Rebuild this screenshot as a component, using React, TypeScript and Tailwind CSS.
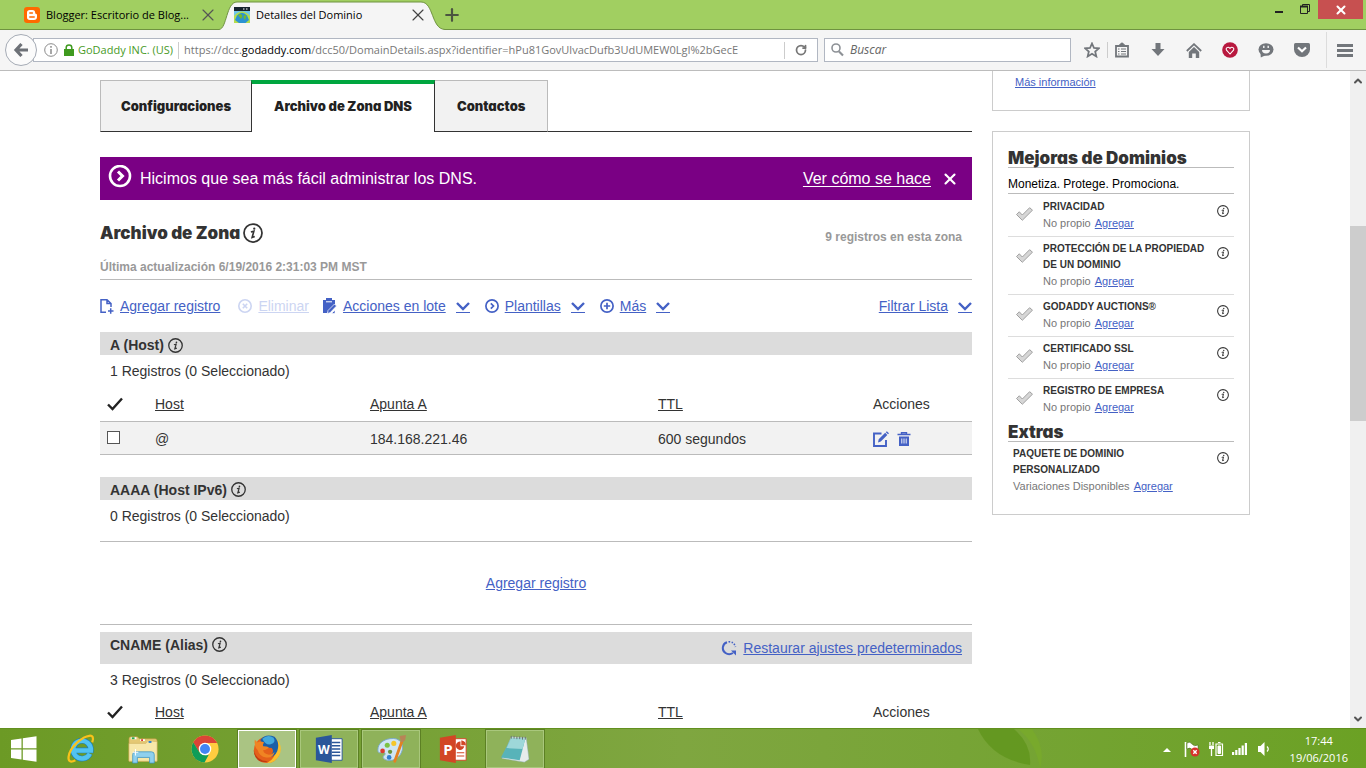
import React from 'react';
import { ChevronDown, ChevronUp, RotateCw, Plus, X } from 'lucide-react';

const linkClass = 'text-[#4461c5] underline';
const heavyFont = "font-[Inter] font-black [font-feature-settings:'cv11']";

const records = [{ host: '@', target: '184.168.221.46', ttl: '600 segundos' }];

const upgrades = [
    'PRIVACIDAD',
    'PROTECCIÓN DE LA PROPIEDAD DE UN DOMINIO',
    'GODADDY AUCTIONS®',
    'CERTIFICADO SSL',
    'REGISTRO DE EMPRESA',
];

const InfoIcon = ({ className = '' }: { className?: string }) => (
    <svg viewBox="0 0 16 16" className={className} fill="none" stroke="#333">
        <circle cx="8" cy="8" r="7.2" strokeWidth="1.4" />
        <path d="M6.3 7.2 8.7 6.6 7.3 11.6 9.4 10.8" strokeWidth="1.3" />
        <circle cx="9" cy="4.5" r=".9" fill="#333" stroke="none" />
    </svg>
);

const HeavyCheck = () => (
    <svg viewBox="0 0 16 14" className="h-[14px] w-4" fill="none" stroke="#222" strokeWidth="2.4">
        <path d="M1 7.5 5.5 12 15 1.5" />
    </svg>
);

const GreyCheck = () => (
    <svg viewBox="0 0 17 14" className="h-[14px] w-[17px]">
        <path d="M.5 7.5 3.3 4.8 6.3 8 13.6.7 16.5 3.2 6.3 13.3Z" fill="#d6d6d6" stroke="#999" strokeWidth=".9" />
    </svg>
);

const Caret = () => (
    <svg viewBox="0 0 14 13" className="h-[13px] w-[14px]" fill="none" stroke="#4461c5">
        <path d="M1 3 7 9 13 3" strokeWidth="2.4" />
        <path d="M0 12.5H14" />
    </svg>
);

const BrowserTabs = () => (
    <div className="flex h-[30px] shrink-0 bg-[#a1cf61] text-[11px] text-black shadow-[inset_0_-1px_0_#6f9340]">
        <div className="flex w-[222px] items-center pl-6">
            <svg viewBox="0 0 16 16" className="mr-[6px] h-4 w-4 shrink-0">
                <rect width="16" height="16" rx="3" fill="#ff6a00" />
                <path d="M5.8 3h2.7C10.3 3 11.2 4.2 11.2 5.7c0 1 .4 1 1.2 1.2.5.2.6.5.6 1v2.2C13 12 11.8 13 10 13H5.8C4 13 3 12 3 10.2V5.8C3 4 4 3 5.8 3Z" fill="#fff" />
                <path d="M5.8 6.1h2.6M5.8 9.9h4.4" stroke="#ff6a00" strokeWidth="1.5" strokeLinecap="round" />
            </svg>
            <span className="w-[152px] whitespace-nowrap">Blogger: Escritorio de Blog...</span>
            <button aria-label="Cerrar pestaña"><X size={20} strokeWidth={1.4} className="text-[#555]" /></button>
        </div>
        <div className="relative flex w-[220px] items-center pl-3">
            <svg viewBox="0 0 226 30" preserveAspectRatio="none" className="absolute -left-[3px] top-0 h-[30px] w-[226px]">
                <path d="M0 29.5C8 29 7 2 18 2H202C215 2 212 29 226 29.5V30H0Z" fill="#f5f5f5" />
                <path d="M0 29.5C8 29 7 2 18 2H202C215 2 212 29 226 29.5" fill="none" stroke="#6f9340" />
            </svg>
            <svg viewBox="0 0 16 16" className="relative mr-[6px] h-4 w-4 shrink-0">
                <rect width="16" height="16" rx="1.5" fill="#6fc5ea" />
                <path d="M0 0H16V4H0Z" fill="#16242e" />
                <path d="M9 2H10.5M12 2H13.5" stroke="#fff" />
                <path d="M0 9Q8 0 16 9V16H0Z" fill="#b5dd4b" />
                <path d="M3 8.5Q8 3 13 8.5L15 13 11.5 16H5L1 13Z" fill="#2b93d1" />
                <path d="M4 8 7 7 8.5 9 7 12ZM10 8 12.5 9 11 13 9.5 11Z" fill="#76b82a" />
            </svg>
            <span className="relative w-[152px] whitespace-nowrap">Detalles del Dominio</span>
            <button aria-label="Cerrar pestaña" className="relative"><X size={20} strokeWidth={1.4} className="text-[#444]" /></button>
        </div>
        <button aria-label="Nueva pestaña"><Plus size={20} strokeWidth={2.6} className="text-[#4b5540]" /></button>
        <div className="ml-auto flex items-start pr-[3px]">
            <button aria-label="Minimizar" className="h-[19px] w-[26px]">
                <svg viewBox="0 0 26 19" className="h-[19px] w-[26px]"><path d="M9 11H17V13H9Z" fill="#222" /></svg>
            </button>
            <button aria-label="Restaurar" className="h-[19px] w-[26px]">
                <svg viewBox="0 0 26 19" className="h-[19px] w-[26px]" fill="none" stroke="#222">
                    <path d="M8.5 6.5H15.5V13.5H8.5ZM10.5 6V4.5H17.5V11.5H16" />
                    <path d="M8 6.5H16" strokeWidth="2" />
                </svg>
            </button>
            <button aria-label="Cerrar" className="flex h-[19px] w-[45px] items-center justify-center bg-[#c75050]">
                <X size={14} strokeWidth={3.5} className="text-white" />
            </button>
        </div>
    </div>
);

const AddressBar = () => (
    <div className="flex h-[41px] shrink-0 items-center border-b border-[#bcbcbc] bg-[#f5f5f5] pl-[5px]">
        <button aria-label="Atrás" className="z-10 flex h-8 w-8 shrink-0 items-center justify-center rounded-full border border-[#a5abb5] bg-[#fbfbfb]">
            <svg viewBox="0 0 16 16" className="h-4 w-4" fill="none" stroke="#6d7177" strokeWidth="3.2">
                <path d="M8.5 2 3 8 8.5 14M3 8H15" />
            </svg>
        </button>
        <div className="-ml-1 flex h-6 min-w-0 flex-1 items-center border border-[#b1b7c2] bg-white pl-[10px] text-[11px]">
            <svg viewBox="0 0 14 14" className="h-[14px] w-[14px] shrink-0" fill="none" stroke="#8a8a8a">
                <circle cx="7" cy="7" r="6.3" />
                <path d="M7 6V11M7 3V4.8" strokeWidth="1.5" />
            </svg>
            <svg viewBox="0 0 10 12" className="ml-[6px] mr-1 h-3 w-[10px] shrink-0">
                <path d="M0 5H10V12H0Z" fill="#3f9a1f" />
                <path d="M2.2 6V3.5a2.8 2.6 0 0 1 5.6 0V6" fill="none" stroke="#3f9a1f" strokeWidth="1.5" />
            </svg>
            <span className="whitespace-nowrap text-[#489a1f]">GoDaddy INC. (US)</span>
            <span className="mx-[5px] h-[17px] w-px shrink-0 bg-[#ccc]" />
            <span className="whitespace-nowrap text-[#777]">
                https://dcc.<span className="text-black">godaddy.com</span>/dcc50/DomainDetails.aspx?identifier=hPu81GovUlvacDufb3UdUMEW0LgI%2bGecE
            </span>
            <span className="ml-auto h-[17px] w-px shrink-0 bg-[#ccc]" />
            <button aria-label="Recargar" className="flex w-[32px] shrink-0 justify-center">
                <RotateCw size={12} strokeWidth={3.5} className="text-[#777]" />
            </button>
        </div>
        <label className="ml-[6px] flex h-6 w-[247px] shrink-0 items-center gap-[6px] border border-[#b1b7c2] bg-white pl-[6px]">
            <svg viewBox="0 0 13 14" className="h-[14px] w-[13px]" fill="none" stroke="#8d9196">
                <circle cx="5" cy="5" r="4" strokeWidth="1.6" />
                <path d="M8 8.5 12 12.5" strokeWidth="2.2" />
            </svg>
            <input aria-label="Buscar" placeholder="Buscar" className="w-40 bg-transparent text-[12px] italic outline-none placeholder:text-[#666]" />
        </label>
        <div className="ml-[13px] flex shrink-0 items-center text-[#72767b]">
            <button aria-label="Marcador">
                <svg viewBox="0 0 16 16" className="h-4 w-4" fill="none" stroke="currentColor" strokeWidth="1.8">
                    <path d="M8 1.5 10 6 14.8 6.4 11.2 9.6 12.3 14.4 8 11.8 3.7 14.4 4.8 9.6 1.2 6.4 6 6Z" />
                </svg>
            </button>
            <span className="mx-[7px] h-4 w-px bg-[#ccc]" />
            <button aria-label="Lista">
                <svg viewBox="0 0 14 16" className="h-4 w-[14px]" fill="none" stroke="currentColor">
                    <path d="M1 4H13V14.5H1Z" strokeWidth="1.8" />
                    <path d="M4 3.5C5 3 5.5 1 7 1S9 3 10 3.5Z" fill="currentColor" />
                    <path d="M3 7H4.5M6 7H11M3 9.5H4.5M6 9.5H11M3 12H4.5M6 12H11" strokeWidth="1.2" />
                </svg>
            </button>
            <button aria-label="Descargas" className="ml-[22px]">
                <svg viewBox="0 0 14 14" className="h-[14px] w-[14px]"><path d="M4.5 0H9.5V6H13.5L7 13 .5 6H4.5Z" fill="currentColor" /></svg>
            </button>
            <button aria-label="Inicio" className="ml-[21px]">
                <svg viewBox="0 0 16 15" className="h-[15px] w-4">
                    <path d="M2.8 9 8 4 13.2 9V15H9.8V10.5H6.2V15H2.8Z" fill="currentColor" />
                    <path d="M.8 8 8 1.2 15.2 8" fill="none" stroke="currentColor" strokeWidth="1.8" />
                </svg>
            </button>
            <button aria-label="Favoritos" className="ml-5">
                <svg viewBox="0 0 16 16" className="h-4 w-4">
                    <circle cx="8" cy="8" r="7.8" fill="#b8193f" />
                    <path d="M8 12 4.5 8.2C3.3 6.3 5.7 4 8 6.3 10.3 4 12.7 6.3 11.5 8.2Z" fill="none" stroke="#fff" strokeWidth="1.1" />
                </svg>
            </button>
            <button aria-label="Hello" className="ml-5">
                <svg viewBox="0 0 16 16" className="h-4 w-4">
                    <ellipse cx="8" cy="7.5" rx="7.5" ry="6.3" fill="currentColor" />
                    <path d="M2.5 11 2.8 15.5 8 13Z" fill="currentColor" />
                    <path d="M5.8 3.8V6M10.2 3.8V6" stroke="#f5f5f5" strokeWidth="1.4" />
                    <path d="M4 8H12A4 3.4 0 0 1 4 8Z" fill="#f5f5f5" />
                </svg>
            </button>
            <button aria-label="Pocket" className="ml-5">
                <svg viewBox="0 0 16 14" className="h-[14px] w-4">
                    <path d="M1.5 0H14.5Q16 0 16 1.5V6.5A8 7.5 0 0 1 0 6.5V1.5Q0 0 1.5 0Z" fill="currentColor" />
                    <path d="M4 4.5 8 8.3 12 4.5" fill="none" stroke="#fff" strokeWidth="2.2" />
                </svg>
            </button>
            <span className="ml-4 h-9 w-px bg-[#dcdcdc]" />
            <button aria-label="Menú" className="ml-[10px] mr-[13px]">
                <svg viewBox="0 0 16 13" className="h-[13px] w-4"><path d="M0 1.5H16M0 6.5H16M0 11.5H16" stroke="currentColor" strokeWidth="2.8" /></svg>
            </button>
        </div>
    </div>
);

const Tabs = () => (
    <nav className={`flex h-[52px] text-[13px] text-[#222] ${heavyFont}`}>
        <a href="#config" className="flex items-center border border-r-0 border-[#bbb] border-b-[#333] bg-[#f2f2f2] px-5">Configuraciones</a>
        <a href="#dns" className="flex items-center border-x border-t-4 border-x-[#333] border-t-[#00a63f] px-[22px] pb-1">Archivo de Zona DNS</a>
        <a href="#contactos" className="flex items-center border border-l-0 border-[#bbb] border-b-[#333] bg-[#f2f2f2] px-[22px]">Contactos</a>
        <span className="flex-1 border-b border-[#333]" />
    </nav>
);

const Banner = () => (
    <div className="mt-[25px] flex h-[43px] items-center bg-[#7a0084] px-2 text-[16px] text-white">
        <svg viewBox="0 0 24 24" className="mb-1 mr-2 h-6 w-6" fill="none" stroke="#fff">
            <circle cx="12" cy="11" r="10" strokeWidth="2.6" />
            <path d="M10 6.5 14.5 11 10 15.5" strokeWidth="3" />
        </svg>
        <span>Hicimos que sea más fácil administrar los DNS.</span>
        <a href="#ver" className="ml-auto underline underline-offset-2">Ver cómo se hace</a>
        <button aria-label="Cerrar aviso" className="ml-[10px] mr-[5px]"><X size={18} strokeWidth={2.8} /></button>
    </div>
);

const ZoneHeader = () => (
    <div className="flex h-20 items-start justify-between border-b border-[#bbb] pt-[21px] text-[12px] font-bold text-[#999]">
        <div>
            <h2 className={`flex h-6 items-center gap-[3px] text-[17px] text-[#333] ${heavyFont}`}>
                Archivo de Zona
                <InfoIcon className="h-5 w-5" />
            </h2>
            <p className="mt-[14px] leading-4">Última actualización 6/19/2016 2:31:03 PM MST</p>
        </div>
        <p className="mr-[10px] mt-2 leading-4">9 registros en esta zona</p>
    </div>
);

const ZoneActions = () => (
    <div className="flex h-[52px] items-center text-[14px] text-[#4461c5]">
        <svg viewBox="0 0 14 16" className="mr-[6px] h-4 w-[14px]" fill="none" stroke="currentColor" strokeWidth="1.5">
            <path d="M6 14.2H1V1.7H7L11 5.5V9M7 1.7V5.5H11M8 13H13.5M10.7 10.2V15.8" />
        </svg>
        <a href="#agregar" className={linkClass}>Agregar registro</a>
        <button disabled className="ml-[18px] flex items-center gap-[6px] text-[#ccd5f2]">
            <svg viewBox="0 0 14 14" className="h-[14px] w-[14px]" fill="none" stroke="currentColor" strokeWidth="1.6">
                <circle cx="7" cy="7" r="6.2" />
                <path d="M4.8 4.8 9.2 9.2M9.2 4.8 4.8 9.2" />
            </svg>
            <span className="underline">Eliminar</span>
        </button>
        <svg viewBox="0 0 14 16" className="ml-[14px] mr-[6px] h-4 w-[14px]">
            <path d="M0 2H3V0H9V2H12V6L4 15H0Z" fill="currentColor" />
            <path d="M3 3.8H9" stroke="#fff" />
            <path d="M4.5 15.5 5 12.5 11.5 6 13.5 8 7 14.8ZM8.5 15.5H12V12Z" fill="currentColor" stroke="#fff" strokeWidth=".7" />
        </svg>
        <a href="#lote" className={linkClass}>Acciones en lote</a>
        <button aria-label="Abrir acciones" className="ml-[10px]"><Caret /></button>
        <svg viewBox="0 0 14 14" className="ml-[15px] mr-[6px] h-[14px] w-[14px]" fill="none" stroke="currentColor" strokeWidth="1.7">
            <circle cx="7" cy="7" r="6.1" />
            <path d="M5.8 4.3 8.5 7 5.8 9.7" />
        </svg>
        <a href="#plantillas" className={linkClass}>Plantillas</a>
        <button aria-label="Abrir plantillas" className="ml-[10px]"><Caret /></button>
        <svg viewBox="0 0 14 14" className="ml-[15px] mr-[6px] h-[14px] w-[14px]" fill="none" stroke="currentColor" strokeWidth="1.7">
            <circle cx="7" cy="7" r="6.1" />
            <path d="M3.8 7H10.2M7 3.8V10.2" />
        </svg>
        <a href="#mas" className={linkClass}>Más</a>
        <button aria-label="Abrir más" className="ml-[10px]"><Caret /></button>
        <a href="#filtrar" className={`ml-auto ${linkClass}`}>Filtrar Lista</a>
        <button aria-label="Abrir filtro" className="ml-[10px]"><Caret /></button>
    </div>
);

const SectionTitle = ({ children }: { children: React.ReactNode }) => (
    <h3 className="flex h-[23px] items-center gap-1 pt-[3px] font-bold">
        {children}
        <InfoIcon className="h-[15px] w-[15px]" />
    </h3>
);

const RecordTable = ({ rows }: { rows: typeof records }) => (
    <table className="w-full table-fixed text-left">
        <thead>
            <tr className="h-[34px] border-b border-[#bbb]">
                <th className="w-[55px] pl-[7px]"><HeavyCheck /></th>
                <th className="w-[215px] font-normal"><a href="#host" className="underline">Host</a></th>
                <th className="w-[288px] font-normal"><a href="#apunta" className="underline">Apunta A</a></th>
                <th className="w-[215px] font-normal"><a href="#ttl" className="underline">TTL</a></th>
                <th className="font-normal">Acciones</th>
            </tr>
        </thead>
        <tbody>
            {rows.map((row) => (
                <tr key={row.target} className="h-[33px] border-b border-[#bbb] bg-[#f2f2f2]">
                    <td className="pl-[7px]">
                        <input type="checkbox" aria-label={`Seleccionar ${row.host}`} className="block h-[13px] w-[13px] appearance-none border border-[#555] bg-white" />
                    </td>
                    <td className="pt-[2px]">{row.host}</td>
                    <td className="pt-[2px]">{row.target}</td>
                    <td className="pt-[2px]">{row.ttl}</td>
                    <td className="pt-[2px]">
                        <div className="flex gap-2 text-[#4461c5]">
                            <button aria-label="Editar">
                                <svg viewBox="0 0 16 16" className="h-4 w-4">
                                    <path d="M8.5 2.5H1V15H13V9" fill="none" stroke="currentColor" strokeWidth="1.9" />
                                    <path d="M5 11.5 5.7 8.3 12.2 1.8 14.3 3.9 7.8 10.5ZM12.8 1.2 13.8.2 16 2.2 15 3.3Z" fill="currentColor" />
                                </svg>
                            </button>
                            <button aria-label="Borrar">
                                <svg viewBox="0 0 14 14" className="h-[14px] w-[14px]">
                                    <path d="M.5 2.5H13.5M4.5 2V.7H9.5V2" fill="none" stroke="currentColor" strokeWidth="1.4" />
                                    <path d="M2 4.5H12V14H2Z" fill="currentColor" />
                                    <path d="M4.8 6.5V11.5M7 6.5V11.5M9.2 6.5V11.5" stroke="#fff" strokeWidth=".9" />
                                </svg>
                            </button>
                        </div>
                    </td>
                </tr>
            ))}
        </tbody>
    </table>
);

const Sidebar = () => (
    <aside className="w-[258px] shrink-0 text-[11px] leading-4 text-[#777]">
        <div className="h-10 border border-t-0 border-[#ccc] pl-[22px] pt-[3px]">
            <a href="#info" className={linkClass}>Más información</a>
        </div>
        <div className="mt-5 border border-[#ccc] px-[15px] pb-5 pt-4">
            <h2 className={`h-5 border-b border-[#bbb] text-[17px] leading-5 text-[#333] ${heavyFont}`}>Mejoras de Dominios</h2>
            <p className="mb-px border-b border-[#bbb] pb-px pt-2 text-[12px] text-black">Monetiza. Protege. Promociona.</p>
            <ul>
                {upgrades.map((name) => (
                    <li key={name} className="flex items-start border-b border-[#ddd] pb-[5px] pt-1 last:border-b-0">
                        <span className="w-[35px] pl-2 pt-2"><GreyCheck /></span>
                        <div className="flex-1">
                            <p className="text-[10px] leading-4 font-bold text-[#333]">{name}</p>
                            <p>No propio <a href="#agregar" className={`ml-px ${linkClass}`}>Agregar</a></p>
                        </div>
                        <InfoIcon className="mr-[5px] mt-[6px] h-3 w-3 shrink-0" />
                    </li>
                ))}
            </ul>
            <h2 className={`mt-[2px] h-5 border-b border-[#bbb] text-[17px] leading-5 text-[#333] ${heavyFont}`}>Extras</h2>
            <div className="flex items-start justify-between pl-[5px] pt-1">
                <div>
                    <p className="w-[140px] text-[10px] leading-4 font-bold text-[#333]">PAQUETE DE DOMINIO PERSONALIZADO</p>
                    <p>Variaciones Disponibles <a href="#agregar" className={`ml-px ${linkClass}`}>Agregar</a></p>
                </div>
                <InfoIcon className="mr-[5px] mt-[6px] h-3 w-3 shrink-0" />
            </div>
        </div>
    </aside>
);

const ScrollBar = () => (
    <div className="flex w-4 shrink-0 flex-col items-center bg-[#f0f0f0] text-[#555]">
        <ChevronUp size={12} strokeWidth={4} className="mt-1" />
        <div className="mt-[139px] h-[195px] w-full bg-[#cdcdcd]" />
        <ChevronDown size={12} strokeWidth={4} className="mb-[3px] mt-auto" />
    </div>
);

const appIcons: { name: string; state: 'idle' | 'open' | 'active'; icon: React.ReactNode }[] = [
    {
        name: 'Internet Explorer',
        state: 'idle',
        icon: (
            <>
                <path d="M25.5 21A9.5 9.5 0 1 1 26.5 17.5H9" fill="none" stroke="#1b7fbd" strokeWidth="6" />
                <path d="M25.5 21A9.5 9.5 0 1 1 26.5 17.5H9" fill="none" stroke="#52c3f1" strokeWidth="4.8" />
                <path d="M10 28C-1 34 1 19 12 9 21 1 32-2 28 9" fill="none" stroke="#f9c21a" strokeWidth="2.4" />
            </>
        ),
    },
    {
        name: 'Explorador de archivos',
        state: 'idle',
        icon: (
            <>
                <path d="M1 5Q1 3 3 3H10L12 5H29Q31 5 31 7V29H1Z" fill="#e4c874" stroke="#b9973e" strokeWidth=".6" />
                <path d="M3 4.5H9M13 6.5H18M21 8.5H27" stroke="#fff" strokeWidth="2" />
                <path d="M4 4.5H7" stroke="#2ba84a" strokeWidth="2" />
                <path d="M14 6.5H16" stroke="#d33" strokeWidth="2" />
                <path d="M1 10H19L21 8H31V29H1Z" fill="#f7e7a9" stroke="#cfb25e" strokeWidth=".6" />
                <path d="M22 8.5H25" stroke="#2b80d0" strokeWidth="2" />
                <path d="M5 31V22Q5 19 8 19H25Q28 19 28 22V31H23V25H10V31Z" fill="#8fd0ee" stroke="#3c93c0" strokeWidth=".8" />
                <path d="M8 16V23M5 19.500H11" stroke="#fff" />
            </>
        ),
    },
    {
        name: 'Chrome',
        state: 'idle',
        icon: (
            <>
                <circle cx="16" cy="16" r="14.5" fill="#ffcd40" />
                <path d="M3.4 8.8A14.5 14.5 0 0 1 28.6 8.8L28.8 9.5H16L9.5 19Z" fill="#db4437" />
                <path d="M3.4 8.8 10 19.5Q14 24 20 22L15.5 30.5A14.5 14.5 0 0 1 3.4 8.8Z" fill="#0f9d58" />
                <circle cx="16" cy="16" r="6.7" fill="#fff" />
                <circle cx="16" cy="16" r="5.3" fill="#4285f4" />
            </>
        ),
    },
    {
        name: 'Firefox',
        state: 'active',
        icon: (
            <>
                <circle cx="16" cy="17" r="14" fill="#e4601a" />
                <path d="M26 5Q33 12 29.5 22 25 31 16 31 26 26 25.5 15Z" fill="#fbc02d" />
                <path d="M9 6Q15-1 24 3 30 9 27 18 24 25 18 24 25 19 21 15 17 14 14 16 10 12 9 6Z" fill="#1c5fa8" />
                <path d="M11 5Q17 0 23 4 26 9 20 11 14 12 11 5Z" fill="#43a8dc" />
                <path d="M3 6 6 9Q9 7 13 9 11 11 12 13 16 13 18 14 16 17 12 17 12 21 18 22 22 22 24 19 23 26 15 25 8 24 6 17 2 13 3 6Z" fill="#f08423" />
                <path d="M2 17Q4 29 17 29 9 32 4 25 1.5 21 2 17Z" fill="#c13a10" />
            </>
        ),
    },
    {
        name: 'Word',
        state: 'open',
        icon: (
            <>
                <path d="M17 5H30V28H17Z" fill="#fff" stroke="#2a5699" />
                <path d="M19 9H28M19 12.5H28M19 16H28M19 19.5H28M19 23H28" stroke="#2a5699" strokeWidth="1.5" />
                <path d="M2 4 19 1V31L2 28Z" fill="#2a5699" />
                <text x="10.5" y="21" textAnchor="middle" fontSize="13" fontWeight="700" fill="#fff">W</text>
            </>
        ),
    },
    {
        name: 'Paint',
        state: 'open',
        icon: (
            <>
                <path d="M15 5C26 3 31 12 27 20 23 29 12 30 8 26 6 23 12 22 9 20 6 19 2 22 2 17 2 10 8 6 15 5Z" fill="#cfe5f4" stroke="#7aa9cc" />
                <circle cx="12" cy="12" r="2.7" fill="#7cc243" />
                <circle cx="19" cy="10" r="2.7" fill="#f5c62c" />
                <circle cx="7" cy="18" r="2.5" fill="#dd3c2d" />
                <circle cx="15" cy="19" r="2.3" fill="#69953f" />
                <circle cx="14" cy="25" r="2.5" fill="#2f7ed0" />
                <path d="M28 7 20 29" stroke="#e38122" strokeWidth="3" strokeLinecap="round" />
                <path d="M25 2 32 1 31 7 27 9Z" fill="#b88457" />
            </>
        ),
    },
    {
        name: 'PowerPoint',
        state: 'idle',
        icon: (
            <>
                <path d="M17 5H30V28H17Z" fill="#fff" stroke="#d24625" />
                <path d="M24 8A4.5 4.5 0 1 0 28 13H24Z" fill="#d24625" />
                <path d="M25.5 7.5V11.5H29Q29 8.5 25.5 7.5ZM20 20H28M20 23.5H28" fill="#d24625" stroke="#d24625" strokeWidth="1.2" />
                <path d="M2 4 19 1V31L2 28Z" fill="#d24625" />
                <text x="10.5" y="22" textAnchor="middle" fontSize="16" fontWeight="700" fill="#fff">P</text>
            </>
        ),
    },
    {
        name: 'Bloc de notas',
        state: 'open',
        icon: (
            <>
                <path d="M12 3 28 4 31 27 26 30 2 26Z" fill="#e6ecec" stroke="#8aa" strokeWidth=".5" />
                <path d="M12 4 27 5 21 28 1 25Z" fill="#58b3b9" />
                <path d="M12 4 27 5 24 16 7 15Z" fill="#9ed7d9" />
                <path d="M12 2V5M15 2V5M18 2.5V5.5M21 2.5V5.5M24 3V6M27 3V6" stroke="#66706e" />
            </>
        ),
    },
];

const appStates = {
    idle: 'border-transparent',
    open: 'border-[#a9c77c] bg-[#8fb25a] outline outline-[#5c8024]',
    active: 'border-white bg-[#aac483] outline outline-[#5c8024]',
};

const TaskBar = () => (
    <footer className="flex h-10 shrink-0 items-center border-t border-[#62901f] bg-linear-to-r from-[#6c9a25] via-[#7fa640] to-[#6ba124] text-white">
        <button aria-label="Inicio" className="ml-[11px] mr-[14px]">
            <svg viewBox="0 0 26 26" className="h-[26px] w-[26px]" fill="#fff">
                <path d="M0 4 10.5 2.5V12.3H0ZM11.8 2.3 25.5.2V12.3H11.8ZM0 13.6H10.5V23.5L0 22ZM11.8 13.6H25.5V25.8L11.8 23.7Z" />
            </svg>
        </button>
        <div className="flex gap-1 pl-px">
            {appIcons.map((app) => (
                <button key={app.name} aria-label={app.name} className={`flex h-[38px] w-[58px] items-center justify-center border ${appStates[app.state]}`}>
                    <svg viewBox="0 0 32 32" className="h-[30px] w-[30px]">{app.icon}</svg>
                </button>
            ))}
        </div>
        <svg viewBox="0 0 110 39" className="ml-[430px] h-[39px] w-[110px]">
            <path d="M4 0Q18 30 56 36 58 16 40 0Z" fill="#5f941b" opacity=".75" />
            <path d="M44 0Q62 14 66 39 72 20 58 0Z" fill="#78a92c" />
        </svg>
        <div className="ml-auto flex items-center">
            <svg viewBox="0 0 8 4" className="mr-[13px] mt-[2px] h-1 w-2"><path d="M0 4 4 0 8 4Z" fill="#fff" /></svg>
            <svg viewBox="0 0 16 16" className="mr-2 h-4 w-4">
                <path d="M1.5 1V16" stroke="#fff" strokeWidth="1.6" />
                <path d="M3 2Q6 0 8 3T14 4V10Q10 11 8 8.5T3 8Z" fill="#fff" stroke="#3f5f10" strokeWidth=".5" />
                <circle cx="11" cy="11" r="4.5" fill="#d6322b" />
                <path d="M9.3 9.3 12.7 12.7M12.7 9.3 9.3 12.7" stroke="#fff" strokeWidth="1.4" />
            </svg>
            <svg viewBox="0 0 16 16" className="mr-2 h-4 w-4" fill="none" stroke="#fff">
                <path d="M8 3H14.5V14.5H8ZM10 1.5H12.5" strokeWidth="1.2" />
                <path d="M10 5H12.5V12.5H10Z" fill="#fff" />
                <path d="M2 1V4M5 1V4M3.5 8V15" strokeWidth="1.3" />
                <path d="M1 4.5H6V8H1Z" fill="#fff" stroke="none" />
            </svg>
            <svg viewBox="0 0 16 13" className="mr-[9px] h-[13px] w-4" fill="#fff">
                <path d="M0 10H2.2V13H0ZM3.2 8H5.4V13H3.2ZM6.4 6H8.6V13H6.4ZM9.6 3.5H11.8V13H9.6ZM12.8 1H15V13H12.8Z" />
            </svg>
            <svg viewBox="0 0 14 14" className="h-[14px] w-[14px]">
                <path d="M1 4H3.5L7.5 0V14L3.5 10H1Z" fill="#fff" />
                <path d="M10 4.5Q12.5 7 10 9.5" fill="none" stroke="#fff" strokeWidth="1.2" />
            </svg>
            <time className="ml-[19px] mr-[18px] text-center text-[11px] leading-[17px]">
                17:44
                <br />
                19/06/2016
            </time>
        </div>
    </footer>
);

const App: React.FC = () => (
    <div className="flex h-screen flex-col overflow-hidden bg-white font-['Open_Sans',sans-serif]">
        <BrowserTabs />
        <AddressBar />
        <div className="flex min-h-0 flex-1 font-['Liberation_Sans',Arial,sans-serif]">
            <div className="flex-1 overflow-hidden">
                <div className="mx-auto flex max-w-[1150px] gap-5">
                    <main className="min-w-0 flex-1 pt-[9px] text-[14px] leading-5 text-[#333]">
                        <Tabs />
                        <Banner />
                        <ZoneHeader />
                        <ZoneActions />
                        <section>
                            <div className="bg-[#dcdcdc] pl-[10px]"><SectionTitle>A (Host)</SectionTitle></div>
                            <p className="py-[6px] pl-[10px]">1 Registros (0 Seleccionado)</p>
                            <RecordTable rows={records} />
                        </section>
                        <section className="mt-[22px]">
                            <div className="bg-[#dcdcdc] pl-[10px]"><SectionTitle>AAAA (Host IPv6)</SectionTitle></div>
                            <p className="pb-[15px] pl-[10px] pt-[6px]">0 Registros (0 Seleccionado)</p>
                            <div className="flex h-[84px] items-center justify-center border-y border-[#bbb]">
                                <a href="#agregar" className={linkClass}>Agregar registro</a>
                            </div>
                        </section>
                        <section className="mt-[7px]">
                            <div className="flex h-8 items-start justify-between bg-[#dcdcdc] px-[10px]">
                                <SectionTitle>CNAME (Alias)</SectionTitle>
                                <div className="flex h-8 items-center gap-[6px]">
                                    <svg viewBox="0 0 16 16" className="h-4 w-4" fill="none" stroke="#4461c5" strokeWidth="2">
                                        <path d="M6 2.3A6 6 0 0 0 4.5 13Q8 15.5 12 13" />
                                        <path d="M7.5 1.8Q13 1.5 14.5 7" strokeDasharray="1.5 1.5" strokeWidth="1.6" />
                                        <path d="M10 10.5H15V15.5Z" fill="#4461c5" stroke="none" />
                                    </svg>
                                    <a href="#restaurar" className={linkClass}>Restaurar ajustes predeterminados</a>
                                </div>
                            </div>
                            <p className="py-[6px] pl-[10px]">3 Registros (0 Seleccionado)</p>
                            <RecordTable rows={[]} />
                        </section>
                    </main>
                    <Sidebar />
                </div>
            </div>
            <ScrollBar />
        </div>
        <TaskBar />
    </div>
);

export default App;
